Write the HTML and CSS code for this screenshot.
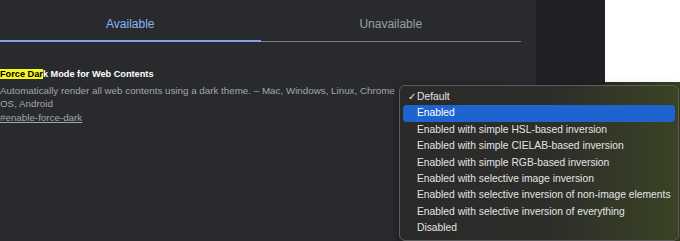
FILE: index.html
```html
<!DOCTYPE html>
<html>

<head>
    <title>Experiments</title>
    <meta name="viewport" content="width=device-width, initial-scale=1.0">
    <link rel="stylesheet" href="styles.css">
</head>

<body>
    <div class="main">
        <div class="tabs">
            <div class="tab tab-active">Available</div>
            <div class="tab">Unavailable</div>
        </div>

        <div class="flag">
            <div class="flag-title"><mark>Force Dar</mark>k Mode for Web Contents</div>
            <p class="flag-desc">Automatically render all web contents using a dark theme. – Mac, Windows, Linux, Chrome OS, Android</p>
            <a class="flag-link" href="#enable-force-dark">#enable-force-dark</a>
        </div>
    </div>

    <div class="side"></div>

    <div class="desk">
        <div class="desk-window"></div>
    </div>

    <ul class="menu">
        <li class="checked">Default</li>
        <li class="selected">Enabled</li>
        <li>Enabled with simple HSL-based inversion</li>
        <li>Enabled with simple CIELAB-based inversion</li>
        <li>Enabled with simple RGB-based inversion</li>
        <li>Enabled with selective image inversion</li>
        <li>Enabled with selective inversion of non-image elements</li>
        <li>Enabled with selective inversion of everything</li>
        <li>Disabled</li>
    </ul>
</body>

</html>
```

FILE: styles.css
```css
body {
    font-family: "Liberation Sans", Arial, sans-serif;
    margin: 0;
    padding: 0;
    display: flex;
    height: 241px;
    overflow: hidden;
    position: relative;
}

.main {
    width: 536px;
    background-color: #292a2d;
}

.tabs {
    display: flex;
    width: 521px;
    border-bottom: 1px solid #7d7e80;
}

.tab {
    flex: 1;
    text-align: center;
    font-size: 12px;
    line-height: 14px;
    color: #9aa0a6;
    padding: 17px 0 9px;
    margin-bottom: -1px;
    border-bottom: 2px solid transparent;
}

.tab-active {
    color: #8ab4f8;
    border-bottom-color: #7fa6de;
}

.flag {
    padding-top: 26px;
    width: 400px;
}

.flag-title {
    font-size: 9.2px;
    font-weight: bold;
    color: #ffffff;
    line-height: 13px;
}

mark {
    background-color: #f7f71f;
    color: #000;
}

.flag-desc {
    margin: 3px 0 0;
    font-size: 9.8px;
    line-height: 13px;
    color: #a2a6ab;
}

.flag-link {
    display: block;
    margin-top: 1px;
    font-size: 9.8px;
    line-height: 13px;
    color: #a2a6ab;
}

.side {
    width: 69px;
    background-color: #202124;
}

.desk {
    flex: 1;
    background: linear-gradient(to right, #2b2c2a, #3b4424);
}

.desk-window {
    height: 82px;
    background-color: #ffffff;
}

.menu {
    position: absolute;
    left: 399px;
    top: 85px;
    width: 280px;
    margin: 0;
    padding: 3px 3px;
    list-style: none;
    box-sizing: border-box;
    border: 1px solid #5d5d5b;
    border-radius: 6px;
    background: linear-gradient(to right, #2a2a29 0%, #2d2e2a 55%, #3a4324 100%);
    box-shadow: 0 2px 8px rgba(0, 0, 0, 0.4);
}

.menu li {
    font-size: 10.3px;
    line-height: 16.4px;
    color: #e4e4e4;
    padding-left: 14px;
    border-radius: 4px;
    white-space: nowrap;
    position: relative;
}

.menu .checked::before {
    content: "✓";
    position: absolute;
    left: 5px;
    font-size: 10px;
}

.menu .selected {
    background-color: #1f63d1;
    color: #ffffff;
}
```
